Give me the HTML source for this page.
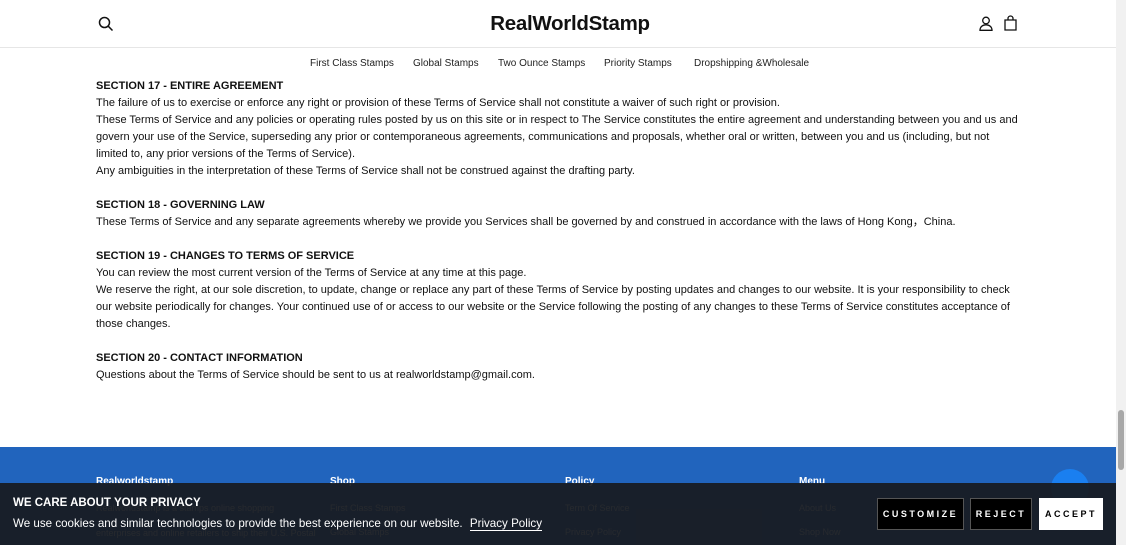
<!DOCTYPE html>
<html><head><meta charset="utf-8"><style>
*{margin:0;padding:0;box-sizing:border-box}
body{width:1126px;height:545px;overflow:hidden;background:#fff;font-family:"Liberation Sans",sans-serif;color:#111;position:relative}
.hdr{position:absolute;left:0;top:0;width:1116px;height:48px;border-bottom:1px solid #e6e6e6}
.logo{position:absolute;left:0;width:1140px;top:12px;text-align:center;font-size:20.5px;font-weight:bold;letter-spacing:-0.3px}
.nav{position:absolute;top:58px;left:0;width:1116px;font-size:10px;color:#222}
.nav span{position:absolute;top:0}
.content{position:absolute;left:96px;top:78px;width:924px;font-size:11px;line-height:17px}
.content b{font-size:11px}
.gap{height:17px}
.footer{position:absolute;left:0;top:447px;width:1116px;height:98px;background:#2164bd}
.ft{position:absolute;top:476px;font-size:10px;color:#fff;font-weight:bold}
.fl{position:absolute;font-size:9px;color:#dfe8f5}
.banner{position:absolute;left:0;top:483px;width:1116px;height:62px;background:rgba(24,26,30,0.93)}
.b1{position:absolute;left:13px;top:497px;color:#fff;font-size:11.5px;font-weight:bold}
.b2{position:absolute;left:13px;top:517px;color:#fff;font-size:11.6px}
.b2 u{text-decoration:none;border-bottom:1px solid #fff;margin-left:4px}
.btn{position:absolute;top:498px;height:32px;font-size:9px;font-weight:bold;letter-spacing:2.5px;display:flex;align-items:center;justify-content:center;border:1px solid #555;background:#000;color:#fff}
.sb{position:absolute;right:0;top:0;width:10px;height:545px;background:#f1f1f1}
</style></head><body>
<div class="hdr">
<svg style="position:absolute;left:98px;top:16px" width="16" height="16" viewBox="0 0 16 16" fill="none" stroke="#111" stroke-width="1.5"><circle cx="6.5" cy="6.5" r="5"/><path d="M10.2 10.2L14.5 14.5"/></svg>
<div class="logo">RealWorldStamp</div>
<svg style="position:absolute;left:979px;top:16px" width="14" height="15" viewBox="0 0 14 15" fill="none" stroke="#111" stroke-width="1.3"><circle cx="7" cy="4.5" r="3.3"/><path d="M1 14.3c0-3.5 2.7-5.5 6-5.5s6 2 6 5.5z"/></svg>
<svg style="position:absolute;left:1004px;top:15px" width="13" height="16" viewBox="0 0 13 16" fill="none" stroke="#111" stroke-width="1.3"><path d="M1 5h11v10H1z"/><path d="M4 5V3.5a2.5 2.5 0 0 1 5 0V5"/></svg>
</div>
<div class="nav"><span style="left:310px">First Class Stamps</span><span style="left:413px">Global Stamps</span><span style="left:498px">Two Ounce Stamps</span><span style="left:604px">Priority Stamps</span><span style="left:694px">Dropshipping &amp;Wholesale</span></div>
<div class="content">
<b>SECTION 17 - ENTIRE AGREEMENT</b><br>
The failure of us to exercise or enforce any right or provision of these Terms of Service shall not constitute a waiver of such right or provision.<br>
These Terms of Service and any policies or operating rules posted by us on this site or in respect to The Service constitutes the entire agreement and understanding between you and us and govern your use of the Service, superseding any prior or contemporaneous agreements, communications and proposals, whether oral or written, between you and us (including, but not limited to, any prior versions of the Terms of Service).<br>
Any ambiguities in the interpretation of these Terms of Service shall not be construed against the drafting party.
<div class="gap"></div>
<b>SECTION 18 - GOVERNING LAW</b><br>
These Terms of Service and any separate agreements whereby we provide you Services shall be governed by and construed in accordance with the laws of Hong Kong，China.
<div class="gap"></div>
<b>SECTION 19 - CHANGES TO TERMS OF SERVICE</b><br>
You can review the most current version of the Terms of Service at any time at this page.<br>
We reserve the right, at our sole discretion, to update, change or replace any part of these Terms of Service by posting updates and changes to our website. It is your responsibility to check our website periodically for changes. Your continued use of or access to our website or the Service following the posting of any changes to these Terms of Service constitutes acceptance of those changes.
<div class="gap"></div>
<b>SECTION 20 - CONTACT INFORMATION</b><br>
Questions about the Terms of Service should be sent to us at realworldstamp@gmail.com.
</div>
<div class="footer"></div>
<div class="ft" style="left:96px">Realworldstamp</div>
<div class="ft" style="left:330px">Shop</div>
<div class="ft" style="left:565px">Policy</div>
<div class="ft" style="left:799px">Menu</div>
<div class="fl" style="left:96px;top:503px">Realworldstamp is a stamps online shopping</div>
<div class="fl" style="left:96px;top:528px">enterprises and online retailers to ship their U.S. Postal</div>
<div class="fl" style="left:330px;top:503px">First Class Stamps</div>
<div class="fl" style="left:330px;top:527px">Global Stamps</div>
<div class="fl" style="left:565px;top:503px">Term Of Service</div>
<div class="fl" style="left:565px;top:527px">Privacy Policy</div>
<div class="fl" style="left:799px;top:503px">About Us</div>
<div class="fl" style="left:799px;top:527px">Shop Now</div>
<div style="position:absolute;left:1051px;top:469px;width:38px;height:38px;border-radius:50%;background:#1a7ff0"></div>
<div class="banner"></div>
<div class="b1">WE CARE ABOUT YOUR PRIVACY</div>
<div class="b2">We use cookies and similar technologies to provide the best experience on our website. <u>Privacy Policy</u></div>
<div class="btn" style="left:877px;width:87px">CUSTOMIZE</div>
<div class="btn" style="left:970px;width:62px">REJECT</div>
<div class="btn" style="left:1039px;width:64px;background:#fff;color:#000;border-color:#fff">ACCEPT</div>
<div class="sb"><div style="position:absolute;left:2px;top:410px;width:6px;height:60px;background:#a8a8a8;border-radius:3px"></div></div>
</body></html>
